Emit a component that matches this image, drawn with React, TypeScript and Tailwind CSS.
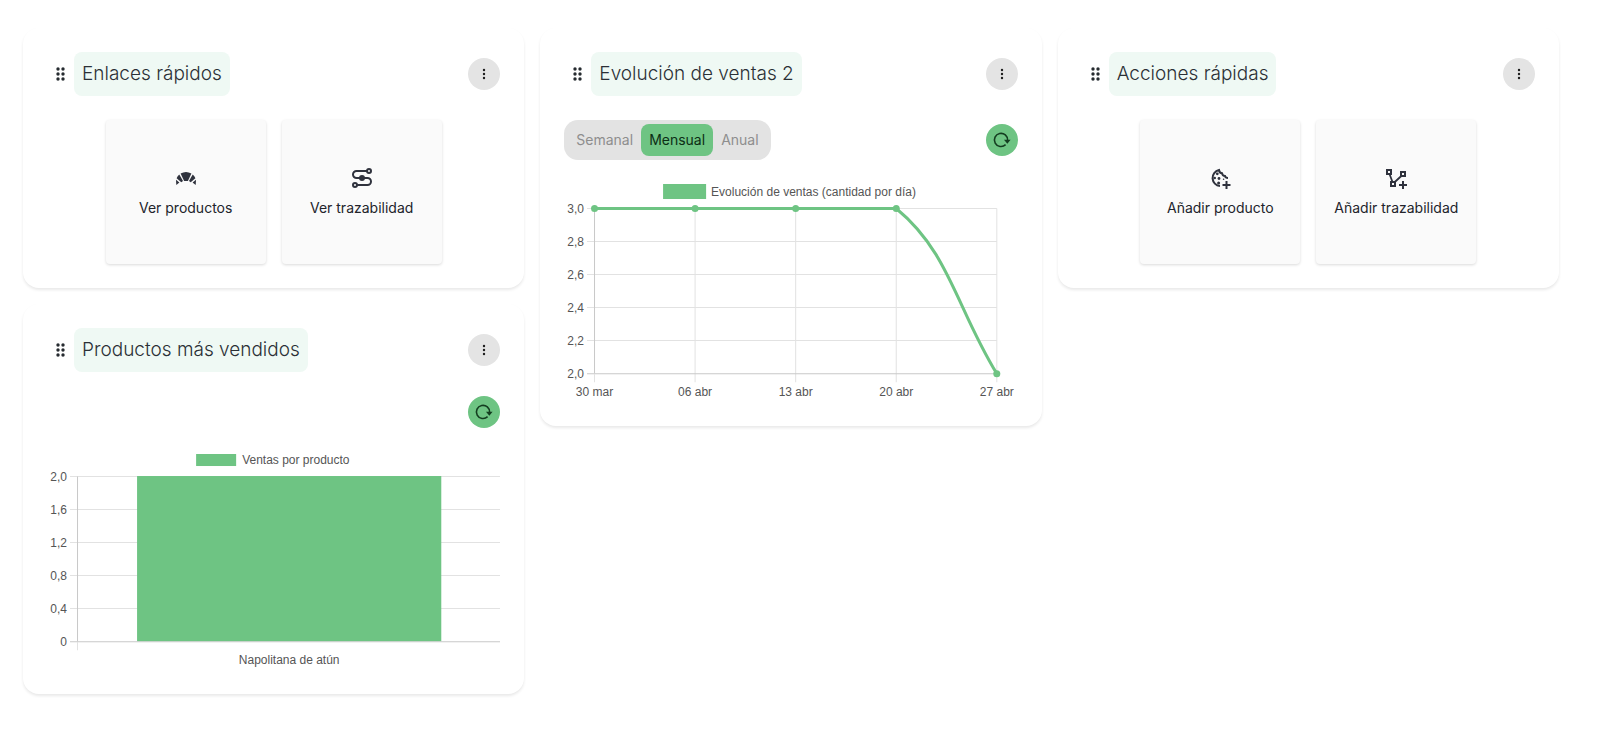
import { useState, type ReactNode } from "react";

const GREEN = "#6ec483";
const CHART_TEXT = "#555555";

function DragDots() {
  return (
    <svg viewBox="0 0 24 24" className="size-6 shrink-0" fill="#262b30" aria-hidden="true">
      {[7, 12, 17].map((y) => (
        <g key={y}>
          <circle cx="11" cy={y} r="1.7" />
          <circle cx="16" cy={y} r="1.7" />
        </g>
      ))}
    </svg>
  );
}

function Kebab() {
  return (
    <svg viewBox="0 0 24 24" className="size-6" fill="#1d1d1d" aria-hidden="true">
      <circle cx="12" cy="8" r="1.2" />
      <circle cx="12" cy="12" r="1.2" />
      <circle cx="12" cy="16" r="1.2" />
    </svg>
  );
}

function Reload() {
  return (
    <svg viewBox="0 0 24 24" className="size-6" aria-hidden="true">
      <path d="M15.6 16.7A6.6 6.6 0 1 1 17.6 12.4" fill="none" stroke="#143d20" strokeWidth="1.6" />
      <path d="M14 11.8H20.6L17.3 15.8Z" fill="#143d20" />
    </svg>
  );
}

function Croissant() {
  return (
    <svg viewBox="0 0 24 24" className="size-6" fill="#2f323d" aria-hidden="true">
      <path d="M6.6 7.4Q12 4.4 17.4 7.4L13.9 15H10.1Z" />
      <path d="M5.3 8.4L9 15L7.3 16.2L2.6 12.2Q3.4 9.9 5.3 8.4Z" />
      <path d="M18.7 8.4L15 15L16.7 16.2L21.4 12.2Q20.6 9.9 18.7 8.4Z" />
      <path d="M2 13.7L5.4 16.5L2.3 19Z" />
      <path d="M22 13.7L18.6 16.5L21.7 19Z" />
    </svg>
  );
}

function Connection() {
  return (
    <svg viewBox="0 0 24 24" className="size-6" fill="none" stroke="#2f323d" strokeWidth="2" aria-hidden="true">
      <path d="M17 5H6.5A3.5 3.5 0 0 0 3 8.5A3.5 3.5 0 0 0 6.5 12H17.5A3.5 3.5 0 0 1 21 15.5A3.5 3.5 0 0 1 17.5 19H7" />
      <circle cx="19" cy="5" r="2" />
      <circle cx="5" cy="19" r="2" />
      <circle cx="12" cy="12" r="3" fill="#2f323d" stroke="none" />
    </svg>
  );
}

function CookiePlus() {
  return (
    <svg viewBox="0 0 24 24" className="size-6" aria-hidden="true">
      <path
        d="M12 20A8.1 8.1 0 0 1 11 4Q11.4 7 14 7.2Q14.4 10 17 10Q17.5 12 20 12"
        fill="none"
        stroke="#2f323d"
        strokeWidth="2"
      />
      <path d="M18.5 15V23M14.5 19H22.5" stroke="#2f323d" strokeWidth="2" />
      <g fill="#2f323d">
        <circle cx="9.3" cy="7.8" r="1.4" />
        <circle cx="6.7" cy="12" r="1.3" />
        <circle cx="11" cy="12.5" r="1.4" />
        <circle cx="10.6" cy="17" r="1.5" />
        <circle cx="15.6" cy="13.3" r="0.8" />
      </g>
    </svg>
  );
}

function PolylinePlus() {
  return (
    <svg viewBox="0 0 24 24" className="size-6" fill="none" stroke="#2f323d" strokeWidth="2" aria-hidden="true">
      <rect x="3" y="4" width="4" height="4" />
      <rect x="17" y="6" width="4" height="4" />
      <rect x="7" y="16" width="4" height="4" />
      <path d="M5.7 8.5L8.3 15.5M10.8 16L17.3 10" strokeWidth="1.8" />
      <path d="M19 15V23M15 19H23" />
    </svg>
  );
}

function Card({ title, children }: { title: string; children: ReactNode }) {
  return (
    <section className="flex flex-col gap-6 rounded-2xl bg-white p-6 shadow-[0_2px_3px_rgba(0,0,0,0.09)]">
      <header className="flex items-center justify-between">
        <div className="flex items-center gap-[3px]">
          <DragDots />
          <h2 className="rounded-lg bg-[#eff9f4] px-2 py-2 text-[19px] leading-7 font-light text-[#2b3036]">{title}</h2>
        </div>
        <button
          type="button"
          aria-label={`Opciones de ${title}`}
          className="flex size-8 items-center justify-center rounded-full bg-[#e4e4e4]"
        >
          <Kebab />
        </button>
      </header>
      {children}
    </section>
  );
}

function Tile({ icon, label }: { icon: ReactNode; label: string }) {
  return (
    <a
      href="#"
      className="flex h-36 w-40 flex-col items-center justify-center gap-2 rounded-sm bg-[#fafafa] text-sm leading-5 text-[#22242b] shadow-[0_1px_3px_rgba(0,0,0,0.15)]"
    >
      {icon}
      {label}
    </a>
  );
}

function RefreshButton() {
  return (
    <button
      type="button"
      aria-label="Actualizar"
      className="ml-auto flex size-8 items-center justify-center rounded-full bg-[#6ec483]"
    >
      <Reload />
    </button>
  );
}

function RangeTabs() {
  const [range, setRange] = useState("Mensual");
  return (
    <div className="flex rounded-[14px] bg-[#e3e3e3] p-1">
      {["Semanal", "Mensual", "Anual"].map((name) => (
        <button
          key={name}
          type="button"
          aria-pressed={range === name}
          onClick={() => setRange(name)}
          className={
            range === name
              ? "h-8 rounded-lg bg-[#6ec483] px-2 text-sm text-[#0c2e15]"
              : "h-8 rounded-lg px-2 text-sm text-[#8e8e8e]"
          }
        >
          {name}
        </button>
      ))}
    </div>
  );
}

const TOP = 32.5;
const STEP = 33;
const BOTTOM = TOP + STEP * 5;
const AXIS_X = 30.5;

function YAxis({ labels, right }: { labels: string[]; right: number }) {
  return (
    <>
      {labels.map((label, i) => (
        <g key={label}>
          <path d={`M23 ${TOP + i * STEP}H${right}`} stroke={i === 5 ? "#c8c8c8" : "#e2e2e2"} />
          <text x="20" y={TOP + i * STEP + 4} textAnchor="end">
            {label}
          </text>
        </g>
      ))}
      <path d={`M${AXIS_X} ${TOP}V${BOTTOM}`} stroke="#c8c8c8" />
      <path d={`M${AXIS_X} ${BOTTOM}V206`} stroke="#e2e2e2" />
    </>
  );
}

const chartClass = "block h-auto w-full font-['Liberation_Sans',Arial,sans-serif] text-[12px]";

function LineChart() {
  const days = ["30 mar", "06 abr", "13 abr", "20 abr", "27 abr"];
  const xs = [30.5, 131, 231.5, 332, 432.5];
  const ys = [TOP, TOP, TOP, TOP, BOTTOM];
  return (
    <svg viewBox="0 0 453 226" className={chartClass} fill={CHART_TEXT} role="img" aria-label="Evolución de ventas">
      <rect x="99" y="8" width="43" height="15" fill={GREEN} />
      <text x="147" y="20">
        Evolución de ventas (cantidad por día)
      </text>
      {xs.slice(1).map((x) => (
        <path key={x} d={`M${x} ${TOP}V206`} stroke="#e2e2e2" />
      ))}
      <YAxis labels={["3,0", "2,8", "2,6", "2,4", "2,2", "2,0"]} right={432.5} />
      <path
        d="M30.5 32.5H332C385 76 392 131.5 432.5 197.5"
        fill="none"
        stroke={GREEN}
        strokeWidth="3"
      />
      {xs.map((x, i) => (
        <circle key={x} cx={x} cy={ys[i]} r="3.5" fill={GREEN} />
      ))}
      {days.map((day, i) => (
        <text key={day} x={xs[i]} y="220" textAnchor="middle">
          {day}
        </text>
      ))}
    </svg>
  );
}

function BarChart() {
  return (
    <svg viewBox="0 0 453 226" className={chartClass} fill={CHART_TEXT} role="img" aria-label="Ventas por producto">
      <rect x="149" y="10" width="40" height="12" fill={GREEN} />
      <text x="195" y="20">
        Ventas por producto
      </text>
      <YAxis labels={["2,0", "1,6", "1,2", "0,8", "0,4", "0"]} right={453} />
      <rect x="90" y="32" width="304" height="165" fill={GREEN} />
      <text x="242" y="220" textAnchor="middle">
        Napolitana de atún
      </text>
    </svg>
  );
}

export default function App() {
  return (
    <main className="grid grid-cols-3 items-start gap-4 bg-white pt-7 pr-[57px] pb-12 pl-[23px] font-['Inter',sans-serif]">
      <div className="flex flex-col gap-4">
        <Card title="Enlaces rápidos">
          <div className="flex justify-center gap-4">
            <Tile icon={<Croissant />} label="Ver productos" />
            <Tile icon={<Connection />} label="Ver trazabilidad" />
          </div>
        </Card>
        <Card title="Productos más vendidos">
          <div className="flex flex-col gap-4">
            <RefreshButton />
            <BarChart />
          </div>
        </Card>
      </div>
      <Card title="Evolución de ventas 2">
        <div className="flex flex-col gap-4">
          <div className="flex items-center">
            <RangeTabs />
            <RefreshButton />
          </div>
          <LineChart />
        </div>
      </Card>
      <Card title="Acciones rápidas">
        <div className="flex justify-center gap-4">
          <Tile icon={<CookiePlus />} label="Añadir producto" />
          <Tile icon={<PolylinePlus />} label="Añadir trazabilidad" />
        </div>
      </Card>
    </main>
  );
}
